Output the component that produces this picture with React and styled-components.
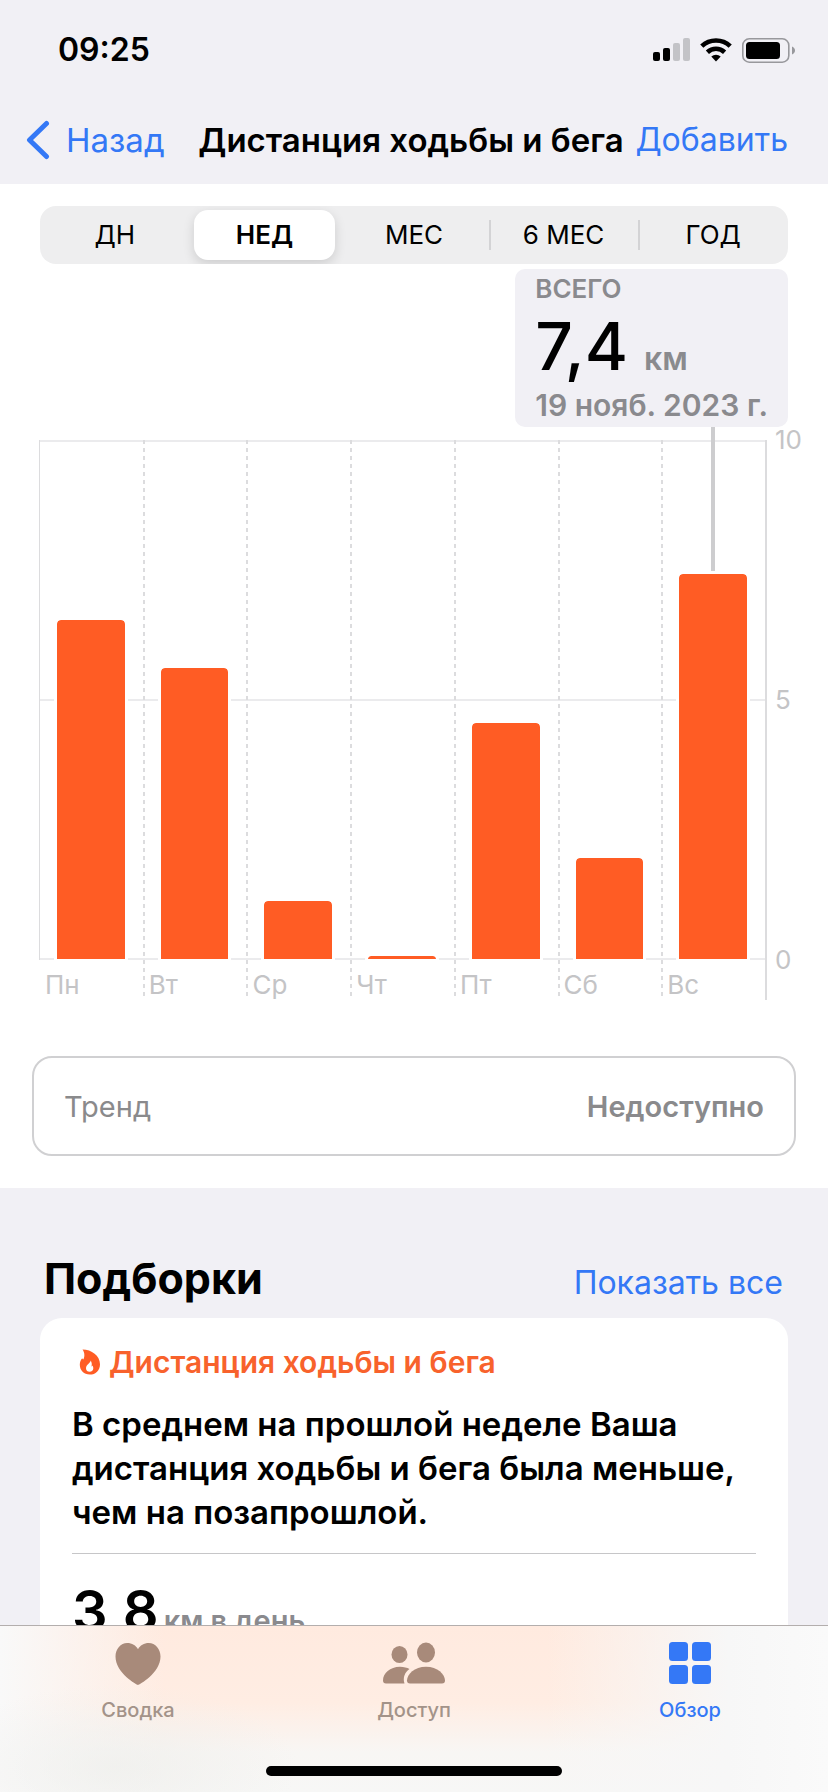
import React, { useState } from "react";
import styled, { createGlobalStyle } from "styled-components";

const GlobalStyle = createGlobalStyle`
  * { box-sizing: border-box; }
  body {
    margin: 0;
    background: #f1f0f5;
    color: #000;
    font-family: Inter, "Liberation Sans", sans-serif;
  }
  button { font: inherit; border: 0; padding: 0; background: none; cursor: pointer; }
  h1, h2, h3, p { margin: 0; }
`;

const Screen = styled.div`
  height: 100vh;
  display: flex;
  flex-direction: column;
  overflow: hidden;
`;

const StatusBar = styled.div`
  height: 96px;
  flex: none;
  display: flex;
  align-items: center;
  justify-content: space-between;
  padding: 4px 33px 0 58px;
`;

const Clock = styled.span`
  font-size: 32px;
  line-height: 40px;
  font-weight: 600;
`;

const StatusIcons = styled.div`
  display: flex;
  align-items: center;
  gap: 10px;
  svg { display: block; }
`;

const NavBar = styled.header`
  height: 88px;
  flex: none;
  display: grid;
  grid-template-columns: 1fr auto 1fr;
  align-items: center;
  padding: 0 40px 0 26px;
`;

const BackButton = styled.button`
  justify-self: start;
  display: flex;
  align-items: center;
  gap: 16px;
  color: #3478f6;
  font-size: 33px;
  line-height: 40px;
`;

const NavTitle = styled.h1`
  padding-left: 8px;
  font-size: 33px;
  line-height: 40px;
  font-weight: 600;
  white-space: nowrap;
`;

const TextLink = styled.a`
  justify-self: end;
  color: #3478f6;
  font-size: 32px;
  line-height: 40px;
  text-decoration: none;
  white-space: nowrap;
`;

const Content = styled.main`
  flex: 1;
  min-height: 0;
  overflow: auto;
  scrollbar-width: none;
`;

const ChartSection = styled.section`
  background: #fff;
  padding: 22px 32px 32px;
`;

const Segments = styled.div`
  height: 58px;
  margin: 0 8px;
  display: flex;
  border-radius: 16px;
  overflow: hidden;
  background: #eeeeef;
`;

const Segment = styled.button`
  flex: 1;
  padding: 4px;
  background: ${(p) => (p.$divided ? "linear-gradient(#d3d3d5, #d3d3d5) left center / 2px 30px no-repeat" : "none")};
  font-size: 26px;
  line-height: 50px;
  font-weight: ${(p) => (p.$active ? 600 : 400)};
`;

const SegmentFace = styled.span`
  display: block;
  border-radius: 14px;
  background: ${(p) => (p.$active ? "#fff" : "transparent")};
  box-shadow: ${(p) => (p.$active ? "0 4px 12px rgba(0, 0, 0, 0.14)" : "none")};
`;

const Callout = styled.div`
  width: fit-content;
  margin: 5px 8px 13px auto;
  padding: 5px 20px;
  border-radius: 10px;
  background: #f1f0f5;
  color: #8a8a8e;
  font-weight: 600;
`;

const CalloutLabel = styled.div`
  font-size: 26px;
  line-height: 30px;
`;

const CalloutValue = styled.div`
  height: 84px;
  font-size: 32px;
  line-height: 84px;
  display: flex;
  align-items: baseline;
  gap: 16px;
`;

const BigNumber = styled.span`
  color: #000;
  font-size: 66px;
  font-weight: 500;
`;

const CalloutDate = styled.div`
  font-size: 30px;
  line-height: 34px;
`;

const Chart = styled.div`
  display: grid;
  grid-template-columns: 1fr 53px;
  margin: 0 -32px 0 7px;
  padding-right: 8px;
  color: #c4c4c6;
  font-size: 26px;
`;

const Plot = styled.div`
  position: relative;
  display: flex;
  border-right: 2px solid #dcdcde;
`;

const GridLine = styled.div`
  position: absolute;
  left: 0;
  right: 0;
  top: ${(p) => p.$top}px;
  height: 2px;
  background: #ebebed;
`;

const Day = styled.div`
  position: relative;
  flex: 1;
  background: ${(p) =>
    p.$first
      ? "linear-gradient(#dcdcde, #dcdcde) left top / 1px 520px no-repeat"
      : "repeating-linear-gradient(#dcdcde 0 4px, transparent 4px 8px) left top / 2px 100% no-repeat"};
`;

const BarSlot = styled.div`
  height: 519px;
  padding: 0 18px;
  display: flex;
  flex-direction: column;
  justify-content: flex-end;
`;

const Leader = styled.div`
  flex: 1;
  width: 4px;
  margin: -13px auto 2px;
  background: #cdcdcf;
`;

const Bar = styled.div`
  border-radius: 4px 4px 0 0;
  background: #ff5c24;
  outline: 3px solid #fff;
`;

const DayLabel = styled.div`
  padding: 11px 0 0 6px;
  line-height: 30px;
`;

const Axis = styled.div`
  height: 550px;
  margin-top: -15px;
  padding-left: 8px;
  display: flex;
  flex-direction: column;
  justify-content: space-between;
  line-height: 30px;
`;

const TrendRow = styled.div`
  height: 100px;
  margin-top: 56px;
  padding: 0 30px;
  display: flex;
  align-items: center;
  justify-content: space-between;
  border: 2px solid #d0d0d2;
  border-radius: 20px;
  color: #8a8a8c;
  font-size: 29px;
`;

const TrendValue = styled.span`
  font-weight: 600;
`;

const Highlights = styled.section`
  padding: 66px 40px 0;
`;

const HighlightsHead = styled.div`
  display: flex;
  align-items: baseline;
  justify-content: space-between;
  padding: 0 5px 0 4px;
  margin-bottom: 15px;
`;

const SectionTitle = styled.h2`
  font-size: 43px;
  line-height: 48px;
  font-weight: 700;
`;

const Card = styled.article`
  padding: 26px 32px 60px;
  border-radius: 22px;
  background: #fff;
`;

const CardTitle = styled.h3`
  display: flex;
  align-items: center;
  gap: 8px;
  padding-left: 7px;
  color: #f8622c;
  font-size: 30px;
  line-height: 36px;
  font-weight: 600;
`;

const CardText = styled.p`
  margin-top: 22px;
  padding-bottom: 19px;
  border-bottom: 1px solid #c6c6c8;
  font-size: 33px;
  line-height: 44px;
  font-weight: 600;
`;

const Average = styled.div`
  height: 64px;
  margin-top: 25px;
  display: flex;
  align-items: baseline;
  gap: 5px;
  color: #8a8a8e;
  font-size: 29px;
  line-height: 64px;
  font-weight: 600;
`;

const AverageNumber = styled.span`
  color: #000;
  font-size: 56px;
`;

const TabBar = styled.nav`
  flex: none;
  border-top: 1px solid #b3aead;
  background:
    radial-gradient(ellipse 22% 50% at 14% 85%, rgba(238, 238, 235, 0.7), transparent),
    linear-gradient(90deg, #f9f9f9 0, rgba(249, 249, 249, 0) 20%, rgba(248, 248, 248, 0) 66%, #f7f7f7 88%, #fafafa 100%),
    linear-gradient(#ffeadf 0, #ffede3 46%, #f8f6f4 76%, #f7f7f6 100%);
`;

const Tabs = styled.div`
  display: flex;
`;

const Tab = styled.button`
  flex: 1;
  display: flex;
  flex-direction: column;
  align-items: center;
  padding-top: 14px;
  color: ${(p) => (p.$active ? "#3478f6" : "#a39389")};
  font-size: 20px;
  line-height: 24px;
  font-weight: 500;
  svg { display: block; margin-bottom: 12px; color: ${(p) => (p.$active ? "#3478f6" : "#a88a7a")}; }
`;

const HomeIndicator = styled.div`
  width: 296px;
  height: 10px;
  margin: 44px auto 16px;
  border-radius: 5px;
  background: #000;
`;

const SignalIcon = () => (
  <svg width="37" height="24" viewBox="0 0 37 24" aria-hidden="true">
    <rect x="0" y="14" width="7" height="9" rx="2" />
    <rect x="10" y="10" width="7" height="13" rx="2" />
    <rect x="20" y="5" width="7" height="18" rx="2" fill="#c3c3c7" />
    <rect x="30" y="0" width="7" height="23" rx="2" fill="#c3c3c7" />
  </svg>
);

const WifiIcon = () => (
  <svg width="32" height="24" viewBox="0 0 32 24" aria-hidden="true">
    <path d="M1.8 8.2a20.5 20.5 0 0 1 28.4 0" fill="none" stroke="#000" strokeWidth="4.6" />
    <path d="M7.4 14.2a12.6 12.6 0 0 1 17.2 0" fill="none" stroke="#000" strokeWidth="4.6" />
    <path d="M11.3 18.6a7 7 0 0 1 9.4 0L16 23.4z" />
  </svg>
);

const BatteryIcon = () => (
  <svg width="53" height="25" viewBox="0 0 53 25" aria-hidden="true">
    <rect x="0.8" y="0.8" width="46" height="23.4" rx="6.5" fill="none" stroke="#98989c" strokeWidth="1.6" />
    <rect x="4" y="4" width="34" height="17" rx="3.5" />
    <path d="M50 8.5c4 1.5 4 6.5 0 8z" fill="#98989c" />
  </svg>
);

const ChevronIcon = () => (
  <svg width="24" height="40" viewBox="0 0 24 40" aria-hidden="true">
    <path d="M20.5 3.5 3.5 20l17 16.5" fill="none" stroke="#3478f6" strokeWidth="5" strokeLinecap="round" strokeLinejoin="round" />
  </svg>
);

const FlameIcon = () => (
  <svg width="22" height="26" viewBox="0 0 22 26" aria-hidden="true">
    <path
      fill="#ff5c24"
      fillRule="evenodd"
      d="M3.5.4C12.5.4 21 6.6 21 15.2 21 21.5 16.6 25.6 10.8 25.6 5 25.6.8 21.5.8 15.8.8 13 1.8 10.6 3.2 9.2 3.4 9.8 3.7 10.2 4.2 10.6 5.8 8 6 3.8 3.5.4ZM11.5 11.5C11.8 14 7 15.6 7 19.2 7 21.6 8.7 22.8 10.6 22.8 12.8 22.8 14.3 21.3 14.3 19.2 14.3 17.9 13.9 17 13.4 16.4 13.2 17 12.9 17.3 12.5 17.4 13.1 15.1 12.8 13.1 11.5 11.5Z"
    />
  </svg>
);

const HeartIcon = () => (
  <svg width="46" height="46" viewBox="0 0 46 46" aria-hidden="true">
    <path fill="currentColor" d="M23 45C22 45 .5 33 .5 16.5.5 9 5.7 3 12.2 3 17 3 20.9 5.4 23 9.2 25.1 5.4 29 3 33.8 3 40.3 3 45.5 9 45.5 16.5 45.5 33 24 45 23 45Z" />
  </svg>
);

const PeopleIcon = () => (
  <svg width="62" height="46" viewBox="0 0 62 46" fill="currentColor" aria-hidden="true">
    <ellipse cx="16.5" cy="14.5" rx="8" ry="8.6" />
    <ellipse cx="43" cy="12.5" rx="9" ry="10" />
    <path d="M3 43.5C1 43.5 0 42.5 0 40.5 0 33.5 7 26.8 17 26.8c4 0 7 1 9.5 2.2C22 32 19.5 37.5 21.5 43.5Z" />
    <path d="M27 43.5c-2 0-3-1-3-3 0-6 7.500-13.700 19-13.700s19 7.700 19 13.700c0 2-1 3-3 3Z" />
  </svg>
);

const GridIcon = () => (
  <svg width="42" height="46" viewBox="0 0 42 46" fill="currentColor" aria-hidden="true">
    <rect x="0" y="2" width="19" height="19" rx="3.5" />
    <rect x="23" y="2" width="19" height="19" rx="3.5" />
    <rect x="0" y="25" width="19" height="19" rx="3.5" />
    <rect x="23" y="25" width="19" height="19" rx="3.5" />
  </svg>
);

const ranges = ["ДН", "НЕД", "МЕС", "6 МЕС", "ГОД"];

const days = [
  { name: "Пн", km: 6.53 },
  { name: "Вт", km: 5.6 },
  { name: "Ср", km: 1.12 },
  { name: "Чт", km: 0.06 },
  { name: "Пт", km: 4.55 },
  { name: "Сб", km: 1.95 },
  { name: "Вс", km: 7.41, selected: true },
];

const tabs = [
  { name: "Сводка", Icon: HeartIcon },
  { name: "Доступ", Icon: PeopleIcon },
  { name: "Обзор", Icon: GridIcon },
];

export default function App() {
  const [range, setRange] = useState(1);
  const [tab, setTab] = useState(2);

  return (
    <Screen>
      <GlobalStyle />
      <StatusBar>
        <Clock>09:25</Clock>
        <StatusIcons>
          <SignalIcon />
          <WifiIcon />
          <BatteryIcon />
        </StatusIcons>
      </StatusBar>
      <NavBar>
        <BackButton type="button">
          <ChevronIcon />
          Назад
        </BackButton>
        <NavTitle>Дистанция ходьбы и бега</NavTitle>
        <TextLink href="#add">Добавить</TextLink>
      </NavBar>

      <Content>
        <ChartSection>
          <Segments>
            {ranges.map((name, i) => (
              <Segment
                key={name}
                type="button"
                aria-pressed={i === range}
                $active={i === range}
                $divided={i > 0 && i !== range && i - 1 !== range}
                onClick={() => setRange(i)}
              >
                <SegmentFace $active={i === range}>{name}</SegmentFace>
              </Segment>
            ))}
          </Segments>

          <Callout>
            <CalloutLabel>ВСЕГО</CalloutLabel>
            <CalloutValue>
              <BigNumber>7,4</BigNumber>
              <span>км</span>
            </CalloutValue>
            <CalloutDate>19 нояб. 2023 г.</CalloutDate>
          </Callout>

          <Chart>
            <Plot>
              <GridLine $top={0} />
              <GridLine $top={259} />
              <GridLine $top={518} />
              {days.map((day, i) => (
                <Day key={day.name} $first={i === 0}>
                  <BarSlot>
                    {day.selected && <Leader />}
                    <Bar style={{ height: `${day.km * 10}%` }} />
                  </BarSlot>
                  <DayLabel>{day.name}</DayLabel>
                </Day>
              ))}
            </Plot>
            <Axis>
              <span>10</span>
              <span>5</span>
              <span>0</span>
            </Axis>
          </Chart>

          <TrendRow>
            <span>Тренд</span>
            <TrendValue>Недоступно</TrendValue>
          </TrendRow>
        </ChartSection>

        <Highlights>
          <HighlightsHead>
            <SectionTitle>Подборки</SectionTitle>
            <TextLink href="#all">Показать все</TextLink>
          </HighlightsHead>
          <Card>
            <CardTitle>
              <FlameIcon />
              Дистанция ходьбы и бега
            </CardTitle>
            <CardText>
              В среднем на прошлой неделе Ваша дистанция ходьбы и бега была меньше, чем на позапрошлой.
            </CardText>
            <Average>
              <AverageNumber>3,8</AverageNumber>
              <span>км в день</span>
            </Average>
          </Card>
        </Highlights>
      </Content>

      <TabBar>
        <Tabs>
          {tabs.map(({ name, Icon }, i) => (
            <Tab key={name} type="button" $active={i === tab} onClick={() => setTab(i)}>
              <Icon />
              {name}
            </Tab>
          ))}
        </Tabs>
        <HomeIndicator />
      </TabBar>
    </Screen>
  );
}
